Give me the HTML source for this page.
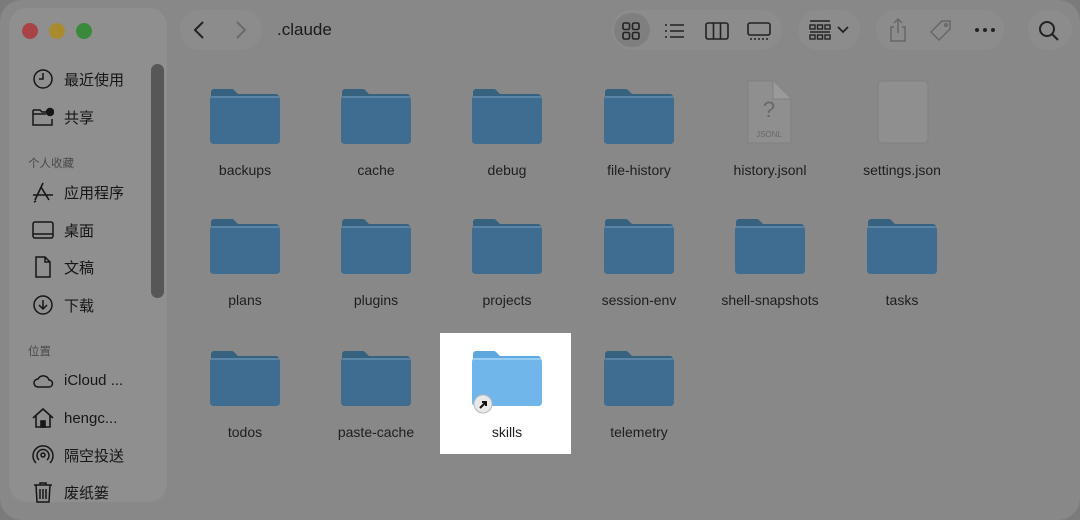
<!DOCTYPE html>
<html><head><meta charset="utf-8"><style>
*{margin:0;padding:0;box-sizing:border-box}
body{width:1080px;height:511px;overflow:hidden;background:#7b7b7b;font-family:"Liberation Sans","Noto Sans CJK SC",sans-serif;position:relative}
.win{position:absolute;left:0;top:0;width:1080px;height:520px;background:#888;border-radius:22px}
.side{position:absolute;left:9px;top:8px;width:158px;height:494px;background:#8f8f8f;border-radius:18px}
.dot{position:absolute;top:23px;width:16px;height:16px;border-radius:50%}
.si{position:absolute;left:32px;font-size:15px;color:#161616;display:flex;align-items:center;gap:10px}
.si svg{width:22px;height:22px}
.sh{position:absolute;left:28px;font-size:11.5px;color:#4a4a4a}
.scroll{position:absolute;left:151px;top:64px;width:13px;height:234px;background:#575757;border-radius:7px}
.pill{position:absolute;top:10px;height:40px;background:#8c8c8c;border-radius:20px}
.title{position:absolute;left:277px;top:20px;font-size:17px;color:#1a1a1a}
.item{position:absolute;width:130px;text-align:center;font-size:14px;color:#1e1e1e}
.item .lab{position:absolute;top:74px;left:0;width:130px}
.f{position:absolute;left:30px;top:0;width:70px;height:56px}
.hl{position:absolute;left:440px;top:333px;width:131px;height:121px;background:#fff}
</style></head><body>
<div class="win"></div>
<div class="side"></div>
<div class="dot" style="left:22px;background:#a84445"></div>
<div class="dot" style="left:49px;background:#a88a2f"></div>
<div class="dot" style="left:76px;background:#3b8a3b"></div>
<div class="pill" style="left:180px;width:82px"></div>
<svg style="position:absolute;left:192px;top:20px" width="16" height="20"><path d="M11 2L3 10l8 8" stroke="#222" stroke-width="2" fill="none"/></svg>
<svg style="position:absolute;left:233px;top:20px" width="16" height="20"><path d="M4 2l8 8-8 8" stroke="#6a6a6a" stroke-width="2" fill="none"/></svg>
<div class="title">.claude</div>
<div class="pill" style="left:612px;width:170px"></div>
<div style="position:absolute;left:614px;top:13px;width:36px;height:34px;border-radius:17px;background:#7f7f7f"></div>
<svg style="position:absolute;left:621px;top:21px" width="20" height="20" fill="none" stroke="#222" stroke-width="1.6"><rect x="2" y="2" width="6.5" height="6.5" rx="1.5"/><rect x="11.5" y="2" width="6.5" height="6.5" rx="1.5"/><rect x="2" y="11.5" width="6.5" height="6.5" rx="1.5"/><rect x="11.5" y="11.5" width="6.5" height="6.5" rx="1.5"/></svg>
<svg style="position:absolute;left:663px;top:21px" width="22" height="20" stroke="#222" stroke-width="1.6"><path d="M7 4h14M7 10h14M7 16h14M2 4h2M2 10h2M2 16h2"/></svg>
<svg style="position:absolute;left:705px;top:20px" width="24" height="22" fill="none" stroke="#222" stroke-width="1.6"><rect x="1" y="3" width="22" height="16" rx="2"/><path d="M8.5 3v16M15.5 3v16"/></svg>
<svg style="position:absolute;left:747px;top:20px" width="24" height="22" fill="none" stroke="#222" stroke-width="1.6"><rect x="1" y="3" width="22" height="12" rx="2"/><path d="M3 19h2M7 19h2M11 19h2M15 19h2M19 19h2"/></svg>
<div class="pill" style="left:798px;width:62px"></div>
<svg style="position:absolute;left:808px;top:19px" width="24" height="22" fill="none" stroke="#222" stroke-width="1.4"><path d="M2 2h20"/><rect x="2" y="6" width="5" height="4"/><rect x="9.5" y="6" width="5" height="4"/><rect x="17" y="6" width="5" height="4"/><path d="M2 13h20"/><rect x="2" y="16" width="5" height="4"/><rect x="9.5" y="16" width="5" height="4"/><rect x="17" y="16" width="5" height="4"/></svg>
<svg style="position:absolute;left:836px;top:25px" width="14" height="10"><path d="M2 2l5 5 5-5" stroke="#222" stroke-width="1.8" fill="none"/></svg>
<div class="pill" style="left:876px;width:128px"></div>
<svg style="position:absolute;left:887px;top:17px" width="22" height="26" fill="none" stroke="#666" stroke-width="1.5"><path d="M7 10H4v14h14V10h-3M11 16V2M7 6l4-4 4 4"/></svg>
<svg style="position:absolute;left:928px;top:18px" width="26" height="26" fill="none" stroke="#666" stroke-width="1.5"><path d="M14 3h8v8L11 22 3 14z"/><circle cx="18" cy="7" r="1.3"/></svg>
<svg style="position:absolute;left:974px;top:27px" width="22" height="6" fill="#222"><circle cx="3" cy="3" r="2"/><circle cx="11" cy="3" r="2"/><circle cx="19" cy="3" r="2"/></svg>
<div class="pill" style="left:1028px;width:44px"></div>
<svg style="position:absolute;left:1038px;top:20px" width="22" height="22" fill="none" stroke="#222" stroke-width="2"><circle cx="9" cy="9" r="7"/><path d="M14 14l6 6"/></svg>

<div class="sh" style="top:155px">个人收藏</div>
<div class="sh" style="top:343px">位置</div>
<div class="si" style="top:68px"><svg viewBox="0 0 22 22" fill="none" stroke="#161616" stroke-width="1.5"><circle cx="11" cy="11" r="9"/><path d="M11 5v6H7"/></svg>最近使用</div>
<div class="si" style="top:106px"><svg viewBox="0 0 22 22" fill="none" stroke="#161616" stroke-width="1.5"><path d="M1 4h7l2 2h5M1 4v15h19v-6M1 8h13"/><circle cx="18" cy="6" r="3.5" fill="#161616"/></svg>共享</div>
<div class="si" style="top:181px"><svg viewBox="0 0 22 22" fill="none" stroke="#161616" stroke-width="1.6"><path d="M11 2L3 19M9 6l8 13M1 14h20M4 20l-2 1"/></svg>应用程序</div>
<div class="si" style="top:219px"><svg viewBox="0 0 22 22" fill="none" stroke="#161616" stroke-width="1.5"><rect x="1" y="3" width="20" height="16" rx="2"/><path d="M1 15h20"/></svg>桌面</div>
<div class="si" style="top:256px"><svg viewBox="0 0 22 22" fill="none" stroke="#161616" stroke-width="1.5"><path d="M4 1h9l5 5v15H4zM13 1v5h5"/></svg>文稿</div>
<div class="si" style="top:294px"><svg viewBox="0 0 22 22" fill="none" stroke="#161616" stroke-width="1.5"><circle cx="11" cy="11" r="9"/><path d="M11 6v9M7 11l4 4 4-4"/></svg>下载</div>
<div class="si" style="top:369px"><svg viewBox="0 0 22 22" fill="none" stroke="#161616" stroke-width="1.5"><path d="M6 18a4 4 0 0 1 0-8 6 6 0 0 1 11 1 3.5 3.5 0 0 1 0 7z"/></svg>iCloud ...</div>
<div class="si" style="top:407px"><svg viewBox="0 0 22 22" fill="none" stroke="#161616" stroke-width="1.6"><path d="M1 11L11 2l10 9M4 9v11h14V9"/><rect x="9" y="14" width="4" height="6" fill="#161616"/></svg>hengc...</div>
<div class="si" style="top:444px"><svg viewBox="0 0 22 22" fill="none" stroke="#161616" stroke-width="1.5"><circle cx="11" cy="11" r="2"/><path d="M7 16a6 6 0 1 1 8 0M4 19a10 10 0 1 1 14 0"/></svg>隔空投送</div>
<div class="si" style="top:481px"><svg viewBox="0 0 22 22" fill="none" stroke="#161616" stroke-width="1.5"><path d="M2 4h18M8 4V2h6v2M4 4l1 17h12l1-17M8 8v10M11 8v10M14 8v10"/></svg>废纸篓</div>
<div class="scroll"></div>

<div class="hl"></div>
<div id="items"></div>
<script>
var names=[["backups","cache","debug","file-history","history.jsonl","settings.json"],["plans","plugins","projects","session-env","shell-snapshots","tasks"],["todos","paste-cache","skills","telemetry"]];
var xs=[180,311,442,574,705,837],ys=[88,218,350],h="";
function folder(l){var b=l?"#70b6ea":"#3e6d91",t=l?"#5ea6de":"#36627f",s=l?"#95cdf4":"#5a85a6";
return '<svg class="f" viewBox="0 0 70 56"><path d="M1 4a3 3 0 0 1 3-3h18a3 3 0 0 1 2 1l4 4h38a3 3 0 0 1 3 3v6H1z" fill="'+t+'"/><rect x="0" y="8" width="70" height="48" rx="3.5" fill="'+b+'"/><rect x="1" y="8" width="68" height="2" rx="1" fill="'+s+'"/></svg>';}
for(var r=0;r<3;r++)for(var c=0;c<names[r].length;c++){var n=names[r][c],ic;
if(n=="history.jsonl")ic='<svg class="f" viewBox="0 0 70 64" style="top:-8px;height:64px"><path d="M13 1h25l18 18v44H13z" fill="#8f8f8f" stroke="#808080"/><path d="M38 1v18h18" fill="#9a9a9a" stroke="#808080"/><text x="34" y="37" font-size="22" fill="#686868" text-anchor="middle" font-family="Liberation Sans">?</text><text x="34" y="57" font-size="8" fill="#686868" text-anchor="middle" font-family="Liberation Sans">JSONL</text></svg>';
else if(n=="settings.json")ic='<svg class="f" viewBox="0 0 70 64" style="top:-8px;height:64px"><rect x="11" y="1" width="50" height="62" rx="4" fill="#8f8f8f" stroke="#818181"/></svg>';
else ic=folder(n=="skills");
if(n=="skills")ic+='<svg style="position:absolute;left:31px;top:44px" width="20" height="20"><circle cx="10" cy="10" r="9" fill="#e8e8e8" stroke="#bbb"/><path d="M7 14l6-6M9 8h4v4" stroke="#111" stroke-width="2" fill="none"/></svg>';
h+='<div class="item" style="left:'+xs[c]+'px;top:'+ys[r]+'px">'+ic+'<div class="lab">'+n+'</div></div>';}
document.getElementById("items").innerHTML=h;
</script>
</body></html>
